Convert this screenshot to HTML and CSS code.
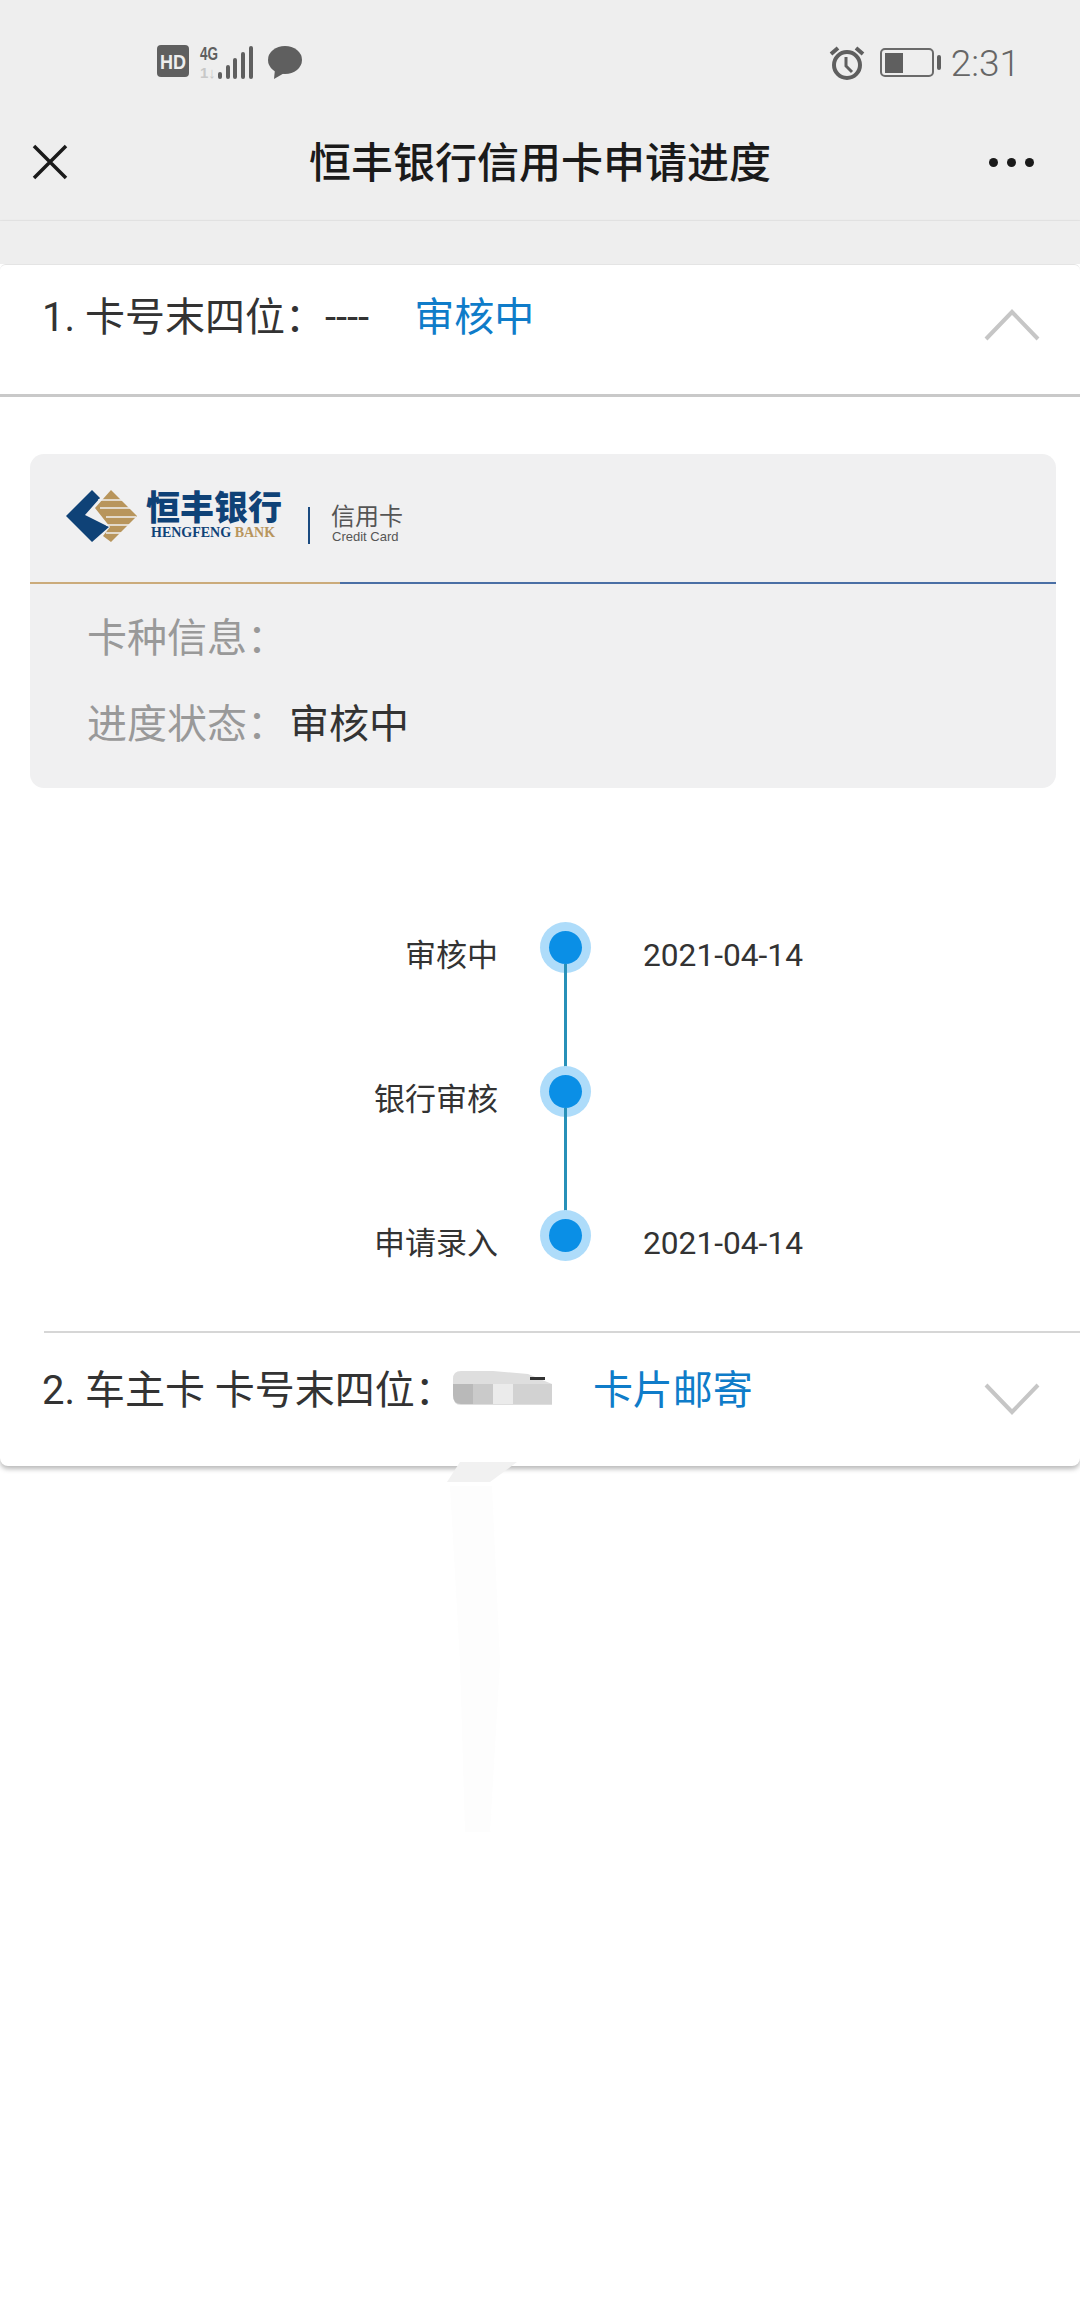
FILE: index.html
```html
<!DOCTYPE html>
<html lang="zh-CN">
<head>
    <meta charset="UTF-8">
    <meta name="viewport" content="width=device-width, initial-scale=1.0">
    <title>恒丰银行信用卡申请进度</title>
    <link rel="stylesheet" href="styles.css">
</head>
<body>
    <header class="top">
        <div class="status">
            <div class="status-left">
                <svg class="ico-hd" width="32" height="32" viewBox="0 0 32 32">
                    <rect width="32" height="32" rx="4" fill="#5f5f5f"/>
                    <text x="3" y="24" textLength="26" lengthAdjust="spacingAndGlyphs" class="hd-text">HD</text>
                </svg>
                <svg class="ico-signal" width="56" height="40" viewBox="0 -4 56 40">
                    <text x="1" y="15" textLength="18" lengthAdjust="spacingAndGlyphs" class="net-text">4G</text>
                    <text x="1" y="33" class="net-faint">1↓</text>
                    <rect x="19" y="27" width="4" height="7" rx="2" fill="#5f5f5f"/>
                    <rect x="27" y="20" width="4" height="14" rx="2" fill="#5f5f5f"/>
                    <rect x="34" y="13" width="4" height="21" rx="2" fill="#5f5f5f"/>
                    <rect x="42" y="7" width="4" height="27" rx="2" fill="#5f5f5f"/>
                    <rect x="50" y="1" width="4" height="33" rx="2" fill="#5f5f5f"/>
                </svg>
                <svg class="ico-chat" width="36" height="36" viewBox="0 0 36 36">
                    <ellipse cx="18" cy="15" rx="17" ry="14" fill="#5f5f5f"/>
                    <path d="M8 24 L7 34 L19 27 Z" fill="#5f5f5f"/>
                </svg>
            </div>
            <div class="status-right">
                <svg width="36" height="36" viewBox="0 0 36 36" fill="none" stroke="#5f5f5f">
                    <circle cx="18" cy="20" r="13" stroke-width="4"/>
                    <path d="M17 12 V21 L23 27" stroke-width="3"/>
                    <path d="M2 9 L9 3 M34 9 L27 3" stroke-width="4"/>
                </svg>
                <svg width="62" height="30" viewBox="0 0 62 30">
                    <rect x="1" y="1" width="52" height="27" rx="4" fill="none" stroke="#6a6a6a" stroke-width="2"/>
                    <rect x="5" y="5" width="18" height="20" fill="#5f5f5f"/>
                    <rect x="57" y="7" width="4" height="15" rx="2" fill="#5f5f5f"/>
                </svg>
                <span class="clock">2:31</span>
            </div>
        </div>
        <div class="nav">
            <svg class="nav-close" width="36" height="36" viewBox="0 0 36 36" fill="none" stroke="#1a1a1a" stroke-width="3.5">
                <path d="M2 2 L34 34 M34 2 L2 34"/>
            </svg>
            <h1 class="nav-title">恒丰银行信用卡申请进度</h1>
            <div class="nav-more"><i></i><i></i><i></i></div>
        </div>
    </header>

    <main class="card">
        <!-- first card, opened -->
        <div class="row row-open">
            <span class="row-text">1. 卡号末四位：----</span>
            <span class="row-state first">审核中</span>
            <svg class="chevron" width="56" height="32" viewBox="0 0 56 32" fill="none" stroke="#c6c6c6" stroke-width="4">
                <path d="M2 30 L28 3 L54 30"/>
            </svg>
        </div>

        <div class="detail">
            <div class="info">
                <div class="logo">
                    <svg width="72" height="54" viewBox="0 0 72 54">
                        <path d="M26 0 L34 8 L19 25 L43 37 L26 52 L0 26 Z" fill="#0f4277"/>
                        <path d="M45 0 L71 26 L45 52 L37 46 L44 37 L29 18 Z" fill="#b8955c"/>
                        <path d="M32 10 H60 M34 18 H68 M40 27 H70 M40 35 H66 M40 43 H56" stroke="#f0f0f0" stroke-width="1.5"/>
                    </svg>
                    <div class="logo-name">
                        <b>恒丰银行</b>
                        <span>HENGFENG <em>BANK</em></span>
                    </div>
                    <div class="logo-bar"></div>
                    <div class="logo-sub">
                        <b>信用卡</b>
                        <span>Credit Card</span>
                    </div>
                </div>
                <div class="info-line"><i></i></div>
                <div class="info-rows">
                    <div class="info-row"><span class="info-label">卡种信息：</span></div>
                    <div class="info-row"><span class="info-label">进度状态：</span><span class="info-value">审核中</span></div>
                </div>
            </div>

            <div class="timeline">
                <div class="step">
                    <span class="step-name">审核中</span>
                    <span class="step-dot"></span>
                    <span class="step-date">2021-04-14</span>
                </div>
                <div class="step">
                    <span class="step-name">银行审核</span>
                    <span class="step-dot"></span>
                    <span class="step-date"></span>
                </div>
                <div class="step">
                    <span class="step-name">申请录入</span>
                    <span class="step-dot"></span>
                    <span class="step-date">2021-04-14</span>
                </div>
            </div>
        </div>

        <!-- second card, closed -->
        <div class="row row-closed">
            <span class="row-text">2. 车主卡 卡号末四位：</span>
            <svg class="masked" width="100" height="34" viewBox="0 0 100 34">
                <path d="M8 0 H40 L75 3 L99 13 V34 H8 Q0 34 0 24 V8 Q0 0 8 0 Z" fill="#dedede"/>
                <path d="M0 13 H20 V33 H8 Q0 33 0 24 Z" fill="#b9b9b9"/>
                <rect x="20" y="13" width="20" height="20" fill="#cacaca"/>
                <rect x="40" y="13" width="20" height="20" fill="#ebebeb"/>
                <rect x="60" y="13" width="39" height="20" fill="#d2d2d2"/>
                <rect x="77" y="6" width="15" height="3" fill="#333"/>
            </svg>
            <span class="row-state">卡片邮寄</span>
            <svg class="chevron" width="56" height="32" viewBox="0 0 56 32" fill="none" stroke="#c6c6c6" stroke-width="4">
                <path d="M2 2 L28 29 L54 2"/>
            </svg>
        </div>
    </main>

    <!-- faint smudge from the screenshot edit -->
    <svg class="smudge" width="120" height="480" viewBox="0 0 120 480">
        <path d="M30 0 H87 L60 20 H17 Z" fill="#f1f1f1"/>
        <path d="M20 24 H62 L70 200 L60 370 H35 L30 200 Z" fill="#fdfdfd"/>
    </svg>
</body>
</html>
```

FILE: styles.css
```css
* {
    box-sizing: border-box;
}

body {
    margin: 0;
    height: 2310px;
    overflow: hidden;
    position: relative;
    background-color: #fff;
    color: #333;
    font-family: Roboto, "Noto Sans CJK SC", sans-serif;
}

.top {
    background-color: #eee;
    border-bottom: 1px solid #e6e6e6;
    height: 221px;
}

.status {
    height: 111px;
    padding: 45px 60px 0 157px;
    display: flex;
    justify-content: space-between;
    align-items: flex-start;
}

.status-left {
    display: flex;
    gap: 10px;
}

.status-left .ico-signal {
    margin-top: -4px;
}

.status-left .ico-chat {
    margin-left: 2px;
}

.hd-text {
    font: bold 21px "Liberation Sans", sans-serif;
    fill: #eee;
}

.net-text {
    font: bold 19px "Liberation Sans", sans-serif;
    fill: #5f5f5f;
}

.net-faint {
    font: bold 15px "Liberation Sans", sans-serif;
    fill: #c8c8c8;
}

.status-right {
    display: flex;
    align-items: center;
    gap: 15px;
    height: 36px;
}

.clock {
    font-size: 37px;
    font-weight: 300;
    color: #666;
    margin-left: -6px;
}

.nav {
    display: flex;
    align-items: center;
    padding: 0 46px 0 32px;
    height: 102px;
}

.nav-title {
    flex: 1;
    margin: 0 0 6px;
    padding-left: 23px;
    text-align: center;
    font-size: 42px;
    font-weight: 500;
    color: #1a1a1a;
}

.nav-more {
    display: flex;
    gap: 9px;
}

.nav-more i {
    width: 9px;
    height: 9px;
    border-radius: 50%;
    background-color: #1a1a1a;
}

.card {
    position: absolute;
    top: 221px;
    left: 0;
    right: 0;
    height: 1245px;
    border-top: 43px solid #eee;
    border-radius: 0 0 8px 8px;
    background-color: #fff;
    box-shadow: 0 3px 5px rgba(0, 0, 0, 0.28);
}

.row {
    position: relative;
    display: flex;
    align-items: flex-start;
    padding-left: 42px;
    font-size: 40px;
    line-height: 60px;
}

.row-open {
    height: 133px;
    padding-top: 23px;
    border-bottom: 3px solid #c9c9c9;
    border-top: 1px solid #e4e4e4;
    border-radius: 6px 6px 0 0;
}

.row-closed {
    height: 135px;
    padding-top: 28px;
    margin-left: 44px;
    padding-left: 0;
    border-top: 2px solid #d6d6d6;
}

.row-text {
    color: #333;
}

.row-state {
    color: #0f7cc9;
    margin-left: 40px;
}

.row-state.first {
    margin-left: 45px;
}

.chevron {
    position: absolute;
    top: 44px;
    right: 40px;
}

.row-closed .chevron {
    top: 50px;
}

.row-closed .row-text {
    margin-left: -2px;
}

.masked {
    margin: 10px 0 0 -2px;
}

.detail {
    padding: 57px 24px 0 30px;
}

.info {
    background-color: #f0f0f1;
    border-radius: 14px;
    height: 334px;
}

.logo {
    height: 128px;
    padding: 36px 0 0 36px;
    display: flex;
    align-items: flex-start;
}

.logo-name {
    margin-left: 8px;
    display: flex;
    flex-direction: column;
    color: #0f4277;
}

.logo-name b {
    font-size: 34px;
    line-height: 36px;
    font-weight: 900;
}

.logo-name span {
    font: bold 14px/14px "Liberation Serif", serif;
    margin-left: 5px;
    white-space: nowrap;
}

.logo-name em {
    font-style: normal;
    color: #b8955c;
}

.logo-bar {
    width: 2px;
    height: 37px;
    margin: 17px 0 0 26px;
    background-color: #1a4a80;
}

.logo-sub {
    margin: 13px 0 0 21px;
    display: flex;
    flex-direction: column;
    color: #555;
}

.logo-sub b {
    font-size: 24px;
    line-height: 28px;
    font-weight: 400;
}

.logo-sub span {
    font: 13px/12px "Liberation Sans", sans-serif;
    margin-left: 1px;
}

.info-line {
    height: 2px;
    background-color: #4a6fa5;
}

.info-line i {
    display: block;
    width: 310px;
    height: 2px;
    background-color: #cbab7b;
}

.info-rows {
    padding: 12px 0 0 57px;
}

.info-row {
    height: 86px;
    font-size: 40px;
    line-height: 86px;
    display: flex;
}

.info-label {
    color: #999;
    width: 202px;
}

.info-value {
    color: #333;
}

.timeline {
    height: 543px;
    padding-top: 136px;
}

.step {
    display: grid;
    grid-template-columns: 468px 136px auto;
    align-items: center;
    height: 144px;
    font-size: 31px;
    align-content: start;
}

.step-name {
    text-align: right;
    line-height: 50px;
    padding-top: 7px;
}

.step-date {
    padding: 7px 0 0 9px;
    font-size: 31.7px;
    line-height: 50px;
}

.step-dot {
    position: relative;
    justify-self: center;
    width: 33px;
    height: 33px;
    border-radius: 50%;
    background-color: #0a8fe6;
    box-shadow: 0 0 0 9px #aedcfa;
    top: -5px;
    left: -1px;
}

.step:not(:last-child) .step-dot::after {
    content: "";
    position: absolute;
    top: 33px;
    left: 15px;
    width: 3px;
    height: 112px;
    background-color: #2790b8;
}

.smudge {
    position: absolute;
    top: 1462px;
    left: 430px;
}
```
